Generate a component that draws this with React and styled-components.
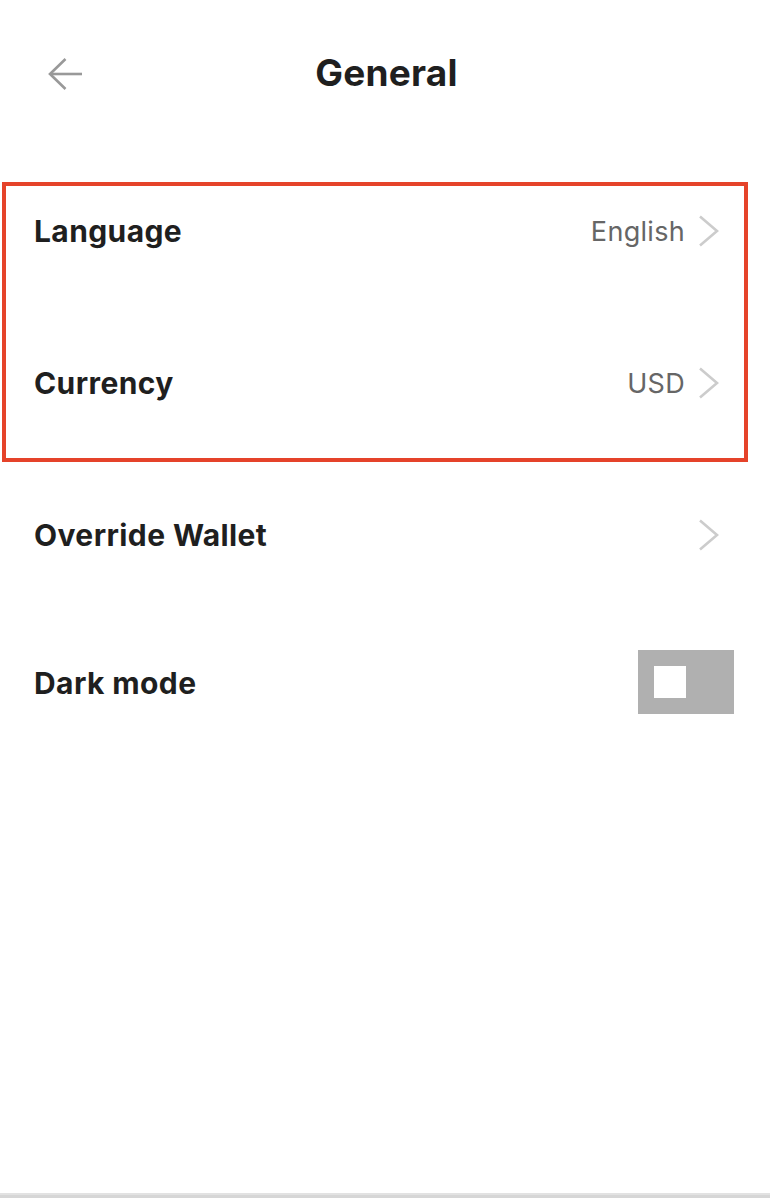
import React from 'react';
import styled, { createGlobalStyle } from 'styled-components';

const GlobalStyle = createGlobalStyle`
	html, body {
		margin: 0;
		padding: 0;
		background: #ffffff;
	}
	body {
		font-family: Inter, 'Noto Sans', 'Liberation Sans', sans-serif;
		color: #1f1f1f;
	}
`;

const Screen = styled.div`
	width: 770px;
	height: 100vh;
	display: flex;
	flex-direction: column;
	overflow: hidden;
`;

const Header = styled.header`
	height: 144px;
	display: grid;
	grid-template-columns: 1fr auto 1fr;
	align-items: center;
`;

const BackButton = styled.button`
	justify-self: start;
	margin: 4px 0 0 48px;
	padding: 0;
	border: 0;
	background: none;
	display: flex;
	cursor: pointer;
`;

const Title = styled.h1`
	margin: 0 0 0 3px;
	font-size: 37px;
	line-height: 1;
	font-weight: 700;
	letter-spacing: 0.2px;
	color: #1f1f1f;
`;

const List = styled.main`
	flex: 1;
	padding-top: 11px;
	display: flex;
	flex-direction: column;
`;

const Group = styled.section`
	position: relative;
	display: flex;
	flex-direction: column;
`;

/* annotation frame drawn over the first two rows */
const Highlight = styled.div`
	position: absolute;
	top: 27px;
	left: 2px;
	width: 746px;
	height: 280px;
	box-sizing: border-box;
	border: 4px solid #e5432a;
	pointer-events: none;
`;

const Row = styled.div`
	height: 152px;
	margin-top: ${(p) => (p.$pull ? `-${p.$pull}px` : '0')};
	display: flex;
	align-items: center;
	justify-content: space-between;
	padding: 0 36px 0 34px;
	box-sizing: border-box;
`;

const Label = styled.span`
	font-size: 30px;
	line-height: 1;
	font-weight: 700;
	letter-spacing: 0.4px;
	color: #1f1f1f;
`;

const Trailing = styled.div`
	display: flex;
	align-items: center;
	gap: 13px;
	margin-right: 14px;
`;

const Value = styled.span`
	font-size: 27px;
	line-height: 1;
	font-weight: 400;
	letter-spacing: 0.3px;
	color: #666666;
`;

const Toggle = styled.div`
	width: 96px;
	height: 64px;
	margin-top: -2px;
	background: ${(p) => (p.$on ? '#3a3a3a' : '#b0b0b0')};
	display: flex;
	align-items: center;
	justify-content: ${(p) => (p.$on ? 'flex-end' : 'flex-start')};
	padding: 0 16px;
	box-sizing: border-box;
`;

const Knob = styled.span`
	width: 32px;
	height: 32px;
	background: #ffffff;
`;

const BottomBar = styled.footer`
	height: 5px;
	border-top: 2px solid #e2e2e2;
	background: #d6d6d6;
	box-sizing: border-box;
`;

const Chevron = () => (
	<svg width="22" height="32" viewBox="0 0 22 32" fill="none">
		<polyline points="2,1.5 19,16 2,30.5" stroke="#cccccc" strokeWidth="2.6" />
	</svg>
);

const BackArrow = () => (
	<svg width="34" height="32" viewBox="0 0 34 32" fill="none">
		<line x1="2" y1="16" x2="34" y2="16" stroke="#999999" strokeWidth="2.6" />
		<polyline points="17.5,1 2,16 17.5,31" stroke="#999999" strokeWidth="2.6" />
	</svg>
);

const LinkRow = ({ label, value }) => (
	<Row>
		<Label>{label}</Label>
		<Trailing>
			{value && <Value>{value}</Value>}
			<Chevron />
		</Trailing>
	</Row>
);

const App = () => {
	return (
		<>
			<GlobalStyle />
			<Screen>
				<Header>
					<BackButton aria-label="Back">
						<BackArrow />
					</BackButton>
					<Title>General</Title>
					<div />
				</Header>
				<List>
					<Group>
						<LinkRow label="Language" value="English" />
						<LinkRow label="Currency" value="USD" />
						<Highlight />
					</Group>
					<LinkRow label="Override Wallet" />
					<Row $pull={4}>
						<Label>Dark mode</Label>
						<Toggle>
							<Knob />
						</Toggle>
					</Row>
				</List>
				<BottomBar />
			</Screen>
		</>
	);
};

export default App;
